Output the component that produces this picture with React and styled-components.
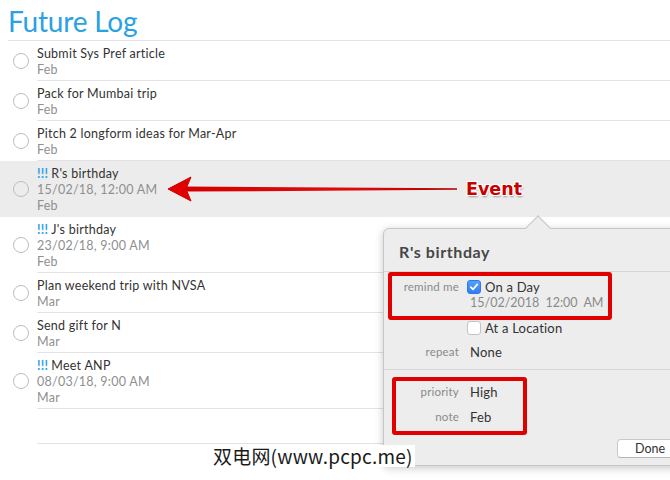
import React from "react";
import styled, { createGlobalStyle } from "styled-components";

const Global = createGlobalStyle`
  html, body { margin: 0; padding: 0; background: #fff; }
  body { width: 670px; height: 480px; overflow: hidden; font-family: Lato, "Open Sans", sans-serif; }
  * { box-sizing: border-box; }
`;

const Stage = styled.div`
  position: relative;
  width: 670px;
  height: 480px;
  overflow: hidden;
  background: #fff;
`;

const Header = styled.div`
  margin-left: 8px;
  height: 41px;
  padding-top: 4px;
  border-bottom: 1px solid #e3e3e3;
`;

const Title = styled.h1`
  margin: 0;
  font-family: Lato, sans-serif;
  font-weight: 400;
  font-size: 28px;
  line-height: 34px;
  color: #29a1e3;
  letter-spacing: -0.2px;
`;

const List = styled.div`
  display: flex;
  flex-direction: column;
`;

const Row = styled.div`
  display: flex;
  align-items: stretch;
  background: ${(p) => (p.$selected ? "#ececec" : "transparent")};
`;

const CheckCol = styled.div`
  width: 37px;
  flex: none;
  display: flex;
  align-items: center;
  padding-left: 13px;
`;

const Circle = styled.span`
  width: 16px;
  height: 16px;
  border-radius: 50%;
  border: 1px solid #bdbdbd;
  background: ${(p) => (p.$selected ? "#ececec" : "#fff")};
`;

const Content = styled.div`
  flex: 1;
  padding: 5px 0 2px;
  min-height: ${(p) => (p.$empty ? "35px" : "0")};
  border-bottom: 1px solid ${(p) => (p.$selected ? "#ececec" : "#e3e3e3")};
`;

const Line = styled.div`
  font-size: 12.5px;
  letter-spacing: 0.25px;
  line-height: 16px;
  color: ${(p) => (p.$sub ? "#8f8f8f" : "#333")};
  white-space: nowrap;
`;

const Bang = styled.span`
  color: #2fa3e8;
  font-weight: 700;
  margin-right: 3px;
`;

/* popover */
const Popover = styled.div`
  position: absolute;
  left: 383px;
  top: 228px;
  width: 307px;
  height: 238px;
  background: #ededed;
  border: 1px solid #c6c6c6;
  border-radius: 6px;
  box-shadow: 0 2px 9px rgba(0, 0, 0, 0.22);
  display: flex;
  flex-direction: column;
`;

const Notch = styled.span`
  position: absolute;
  left: 145px;
  top: -10px;
  width: 18px;
  height: 18px;
  background: #ededed;
  border-top: 1px solid #c6c6c6;
  border-left: 1px solid #c6c6c6;
  transform: rotate(45deg);
`;

const PopTitle = styled.div`
  position: relative;
  padding: 13px 15px 9px;
  font-size: 16px;
  letter-spacing: 0.6px;
  line-height: 20px;
  font-weight: 700;
  color: #474747;
  border-bottom: 1px solid #d6d6d6;
`;

const Section = styled.div`
  display: grid;
  grid-template-columns: 75px 1fr;
  column-gap: 8px;
  row-gap: ${(p) => p.$gap}px;
  padding: ${(p) => p.$pad};
  border-bottom: ${(p) => (p.$divider ? "1px solid #d6d6d6" : "none")};
`;

const Label = styled.div`
  text-align: right;
  font-size: 11.5px;
  letter-spacing: 0.2px;
  line-height: 16px;
  color: #8a8a8a;
`;

const Value = styled.div`
  font-size: 13px;
  letter-spacing: 0.2px;
  line-height: 16px;
  color: #333;
  padding-left: ${(p) => (p.$indent ? "3px" : "0")};
`;

const Stack = styled.div`
  display: flex;
  flex-direction: column;
`;

const CheckLine = styled.div`
  display: flex;
  align-items: center;
  gap: 4px;
  font-size: 13px;
  letter-spacing: 0.2px;
  line-height: 16px;
  color: #333;
  margin-top: ${(p) => (p.$nudge ? "1px" : "0")};
`;

const Box = styled.span`
  width: 14px;
  height: 14px;
  border-radius: 3px;
  display: inline-flex;
  align-items: center;
  justify-content: center;
  background: ${(p) => (p.$checked ? "linear-gradient(#55a0fb, #2f7ef3)" : "#fff")};
  border: 1px solid ${(p) => (p.$checked ? "#2f78e6" : "#c3c3c3")};
`;

const SubValue = styled.div`
  font-size: 12.5px;
  line-height: 16px;
  color: #8a8a8a;
  padding-left: 3px;
  word-spacing: 3px;
`;

const Footer = styled.div`
  display: flex;
  justify-content: flex-end;
  padding: 14px 12px 0 0;
`;

const Button = styled.div`
  width: 60px;
  height: 19px;
  padding-left: 17px;
  background: #fff;
  border: 1px solid #c9c9c9;
  border-bottom-color: #b5b5b5;
  border-radius: 4px;
  font-size: 12.5px;
  line-height: 17px;
  color: #333;
`;

/* annotations */
const RedBox = styled.div`
  position: absolute;
  border: 4px solid #e10000;
  border-radius: 3px;
  left: ${(p) => p.$x}px;
  top: ${(p) => p.$y}px;
  width: ${(p) => p.$w}px;
  height: ${(p) => p.$h}px;
`;

const ArrowSvg = styled.svg`
  position: absolute;
  left: 160px;
  top: 170px;
`;

const EventLabel = styled.div`
  position: absolute;
  left: 466px;
  top: 178px;
  font-family: "DejaVu Sans", sans-serif;
  font-weight: 700;
  font-size: 17.5px;
  line-height: 22px;
  color: #c80000;
  text-shadow: 1px 0 0 #fff, -1px 0 0 #fff, 0 1px 0 #fff, 0 -1px 0 #fff,
    1px 1px 0 #fff, -1px -1px 0 #fff, 1px -1px 0 #fff, -1px 1px 0 #fff,
    1px 2px 2px rgba(0, 0, 0, 0.35);
`;

const Watermark = styled.div`
  position: absolute;
  left: 211px;
  top: 445px;
  padding: 0 2px;
  background: #fff;
  font-family: "Noto Sans CJK SC", sans-serif;
  font-size: 19px;
  line-height: 22px;
  color: #1a1a1a;
  letter-spacing: 0.2px;
`;

const items = [
  { title: "Submit Sys Pref article", lines: ["Feb"] },
  { title: "Pack for Mumbai trip", lines: ["Feb"] },
  { title: "Pitch 2 longform ideas for Mar-Apr", lines: ["Feb"] },
  { title: "R's birthday", bang: true, lines: ["15/02/18, 12:00 AM", "Feb"], selected: true },
  { title: "J's birthday", bang: true, lines: ["23/02/18, 9:00 AM", "Feb"] },
  { title: "Plan weekend trip with NVSA", lines: ["Mar"] },
  { title: "Send gift for N", lines: ["Mar"] },
  { title: "Meet ANP", bang: true, lines: ["08/03/18, 9:00 AM", "Mar"] },
];

const Check = () => (
  <svg width="10" height="10" viewBox="0 0 10 10">
    <path d="M1.8 5.2 L4 7.4 L8.3 2.4" fill="none" stroke="#fff" strokeWidth="1.7" strokeLinecap="round" strokeLinejoin="round" />
  </svg>
);

export default function App() {
  return (
    <Stage>
      <Global />
      <Header>
        <Title>Future Log</Title>
      </Header>
      <List>
        {items.map((it, i) => (
          <Row key={i} $selected={it.selected}>
            <CheckCol>
              <Circle $selected={it.selected} />
            </CheckCol>
            <Content $selected={it.selected}>
              <Line>
                {it.bang && <Bang>!!!</Bang>}
                {it.title}
              </Line>
              {it.lines.map((l, j) => (
                <Line key={j} $sub>
                  {l}
                </Line>
              ))}
            </Content>
          </Row>
        ))}
        <Row>
          <CheckCol />
          <Content $empty />
        </Row>
      </List>

      <ArrowSvg width="305" height="40" viewBox="0 0 305 40">
        <defs>
          <linearGradient id="shaft" x1="0" x2="1" y1="0" y2="0">
            <stop offset="0" stopColor="#d40000" />
            <stop offset="0.6" stopColor="#e00a0a" />
            <stop offset="1" stopColor="#b00000" />
          </linearGradient>
        </defs>
        <polygon points="24,16.6 297,18.2 297,19.8 24,21.6" fill="url(#shaft)" />
        <path d="M8 19 L31 7 L26 19 L31 31 Z" fill="#e00000" stroke="#d00000" strokeWidth="1" strokeLinejoin="round" />
      </ArrowSvg>
      <EventLabel>Event</EventLabel>

      <Popover>
        <Notch />
        <PopTitle>R's birthday</PopTitle>
        <Section $gap={8} $pad="7px 0 9px" $divider>
          <Label>remind me</Label>
          <Stack>
            <CheckLine>
              <Box $checked>
                <Check />
              </Box>
              On a Day
            </CheckLine>
            <SubValue>15/02/2018 12:00 AM</SubValue>
          </Stack>
          <Label />
          <CheckLine $nudge>
            <Box />
            At a Location
          </CheckLine>
          <Label>repeat</Label>
          <Value $indent>None</Value>
        </Section>
        <Section $gap={9} $pad="14px 0 0">
          <Label>priority</Label>
          <Value $indent>High</Value>
          <Label>note</Label>
          <Value $indent>Feb</Value>
        </Section>
        <Footer>
          <Button>Done</Button>
        </Footer>
      </Popover>

      <RedBox $x={388} $y={272} $w={224} $h={48} />
      <RedBox $x={392} $y={377} $w={135} $h={58} />

      <Watermark>双电网(www.pcpc.me)</Watermark>
    </Stage>
  );
}
